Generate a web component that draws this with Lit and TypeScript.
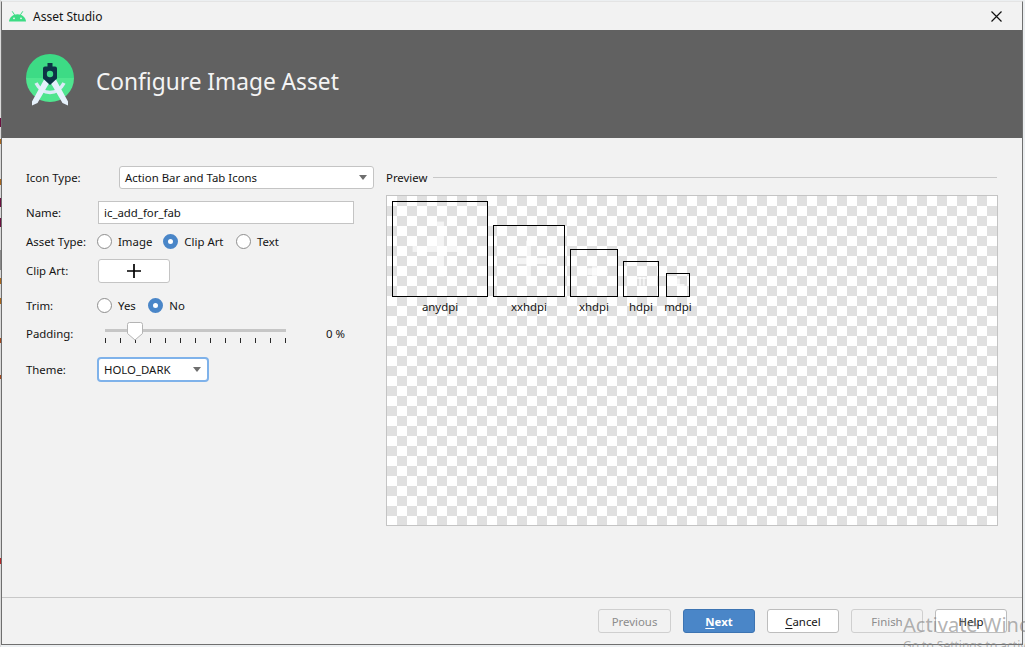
import { LitElement, html, css, svg } from 'lit';
import { customElement } from 'lit/decorators.js';

interface Density { label: string; size: number; cols: number; bars: number[][]; }

// the faint plus inside each preview, in px relative to the box
const DENSITIES: Density[] = [
  { label: 'anydpi', size: 96, cols: 96, bars: [[20, 45, 55, 6], [45, 20, 7, 56]] },
  { label: 'xxhdpi', size: 72, cols: 72, bars: [[24, 33, 30, 6], [33, 15, 5, 45]] },
  { label: 'xhdpi', size: 48, cols: 48, bars: [[17, 19, 21, 7], [22, 17, 5, 21]] },
  { label: 'hdpi', size: 36, cols: 36, bars: [[14, 16, 10, 2], [16, 16, 2, 9], [20, 16, 2, 9]] },
  { label: 'mdpi', size: 24, cols: 28, bars: [[11, 5, 3, 8], [11, 11, 8, 2]] },
];

@customElement('app-root')
export class AppRoot extends LitElement {
  static styles = css`
    :host {
      display: block;
      position: relative;
      width: 1025px;
      height: 647px;
      overflow: hidden;
      background: #eceff1;
      font-family: 'Noto Sans', 'Open Sans', sans-serif;
      font-size: 11.4px;
      color: #141414;
    }
    /* bits of the desktop showing behind the dialog's left edge */
    .behind {
      position: absolute;
      left: 0;
      top: 0;
      width: 1px;
      height: 647px;
      background:
        linear-gradient(#6b1040, #6b1040) 0 118px / 1px 9px no-repeat,
        linear-gradient(#a8661c, #a8661c) 0 139px / 1px 5px no-repeat,
        linear-gradient(#a8661c, #a8661c) 0 179px / 1px 6px no-repeat,
        linear-gradient(#6b1040, #6b1040) 0 198px / 1px 9px no-repeat,
        linear-gradient(#6b1040, #6b1040) 0 218px / 1px 9px no-repeat,
        linear-gradient(#8a8a8a, #8a8a8a) 0 250px / 1px 20px no-repeat,
        linear-gradient(#a8661c, #a8661c) 0 278px / 1px 6px no-repeat,
        linear-gradient(#a8661c, #a8661c) 0 298px / 1px 6px no-repeat,
        linear-gradient(#a04a20, #a04a20) 0 338px / 1px 5px no-repeat,
        linear-gradient(#a04a20, #a04a20) 0 375px / 1px 4px no-repeat,
        linear-gradient(#b52a2a, #b52a2a) 0 558px / 1px 6px no-repeat,
        #d9d9d9;
    }
    .window {
      position: relative;
      box-sizing: border-box;
      margin: 1px 0 0 1px;
      width: 1022px;
      height: 644px;
      border: 1px solid #6f6f6f;
      border-top: 1px solid #e4e4e4;
      background: #f2f2f2;
      display: flex;
      flex-direction: column;
    }
    .titlebar {
      height: 28px;
      font-size: 12px;
      display: flex;
      align-items: center;
      padding: 0 20px 0 7px;
      gap: 7px;
      flex: none;
    }
    .titlebar .name { flex: 1; }
    .banner {
      height: 108px;
      flex: none;
      background: #616161;
      display: flex;
      align-items: center;
      padding-left: 24px;
      gap: 22px;
    }
    .banner svg { margin-bottom: 6px; }
    .banner h1 {
      margin: 0 0 6px;
      font-size: 22.7px;
      font-weight: 400;
      color: #f4f4f4;
    }
    .body {
      flex: 1;
      display: flex;
      padding-top: 22px;
      min-height: 0;
    }
    .form {
      width: 384px;
      flex: none;
      box-sizing: border-box;
      padding-left: 24px;
      display: grid;
      grid-template-columns: 72px 1fr;
      grid-template-rows: 34px 36px 23px 35px 35px 21px 50px;
      align-items: center;
      align-content: start;
    }
    .field { display: flex; align-items: center; }
    .select, .input, .clip {
      box-sizing: border-box;
      background: #fff;
      border: 1px solid #c4c4c4;
      display: flex;
      align-items: center;
    }
    .select {
      height: 23px;
      width: 255px;
      margin-left: 21px;
      margin-right: 10px;
      border-radius: 3px;
      padding: 0 6px 0 5px;
      justify-content: space-between;
    }
    .select.focus {
      width: 112px;
      height: 25px;
      margin: 0 0 0 -1px;
      border: 2px solid #7fb2ea;
      border-radius: 4px;
      padding: 0 6px 0 5px;
    }
    .arrow {
      width: 0;
      height: 0;
      border-left: 4.5px solid transparent;
      border-right: 4.5px solid transparent;
      border-top: 5px solid #6e6e6e;
    }
    .input {
      height: 23px;
      width: 256px;
      padding-left: 5px;
    }
    .clip {
      width: 72px;
      height: 24px;
      border-radius: 3px;
      justify-content: center;
    }
    .radio {
      box-sizing: border-box;
      width: 15px;
      height: 15px;
      border-radius: 50%;
      background: #fff;
      border: 1px solid #8e8e8e;
      margin-right: 6px;
      margin-left: -1px;
      flex: none;
    }
    .radio.on {
      border: 5px solid #4a86c8;
    }
    .field .opt { margin-right: 12px; }
    .field .opt.more { margin-right: 13.5px; }
    .slider { display: flex; align-items: center; margin-left: 7px; height: 20px; }
    .slider svg { margin-top: 1px; }
    .slider .pct { margin-left: 39px; }
    .preview {
      flex: 1;
      box-sizing: border-box;
      padding-right: 24px;
      padding-top: 6px;
      min-width: 0;
    }
    .legend {
      display: flex;
      align-items: center;
      gap: 6px;
      height: 22px;
      margin-bottom: 7px;
    }
    .legend::after {
      content: '';
      flex: 1;
      height: 1px;
      background: #c8c8c8;
      margin-right: 1px;
    }
    .canvas {
      box-sizing: border-box;
      width: 612px;
      height: 331px;
      border: 1px solid #c4c4c4;
      padding: 5px;
      background-color: #fff;
      background-image: conic-gradient(#fff 25%, #e0e0e0 0 50%, #fff 0 75%, #e0e0e0 0);
      background-size: 20px 20px;
      background-position: 10px 0;
    }
    .tiles {
      display: flex;
      gap: 5px;
      align-items: flex-end;
    }
    .tile {
      display: flex;
      flex-direction: column;
      align-items: center;
    }
    .tile .box {
      box-sizing: border-box;
      border: 1px solid #000;
      display: block;
    }
    .tile .cap {
      height: 18px;
      line-height: 19px;
      white-space: nowrap;
    }
    .footer {
      height: 47px;
      flex: none;
      box-sizing: border-box;
      border-top: 1px solid #c8c8c8;
      display: flex;
      justify-content: flex-end;
      align-items: flex-start;
      padding: 11px 15px 0 0;
      gap: 12px;
    }
    .btn {
      box-sizing: border-box;
      width: 72px;
      height: 24px;
      border-radius: 3px;
      border: 1px solid #bdbdbd;
      background: #fff;
      display: flex;
      align-items: center;
      justify-content: center;
    }
    .btn.wide { width: 73px; }
    .btn.off {
      background: transparent;
      border-color: #cfcfcf;
      color: #8c8c8c;
    }
    .btn.primary {
      background: #4a86c8;
      border-color: #3d74b2;
      color: #fff;
      font-weight: 700;
    }
    .watermark {
      position: absolute;
      left: 903px;
      top: 611px;
      font-size: 20px;
      line-height: 27px;
      color: rgba(130, 130, 130, 0.62);
      white-space: nowrap;
      pointer-events: none;
    }
    .watermark small {
      display: block;
      font-size: 12px;
      line-height: 16px;
    }
    u { text-underline-offset: 2px; }
  `;

  private renderTile(d: Density) {
    return html`
      <div class="tile" style="width:${d.cols}px">
        <svg class="box" width=${d.size} height=${d.size} viewBox="0 0 ${d.size} ${d.size}">
          ${d.bars.map(b => svg`<rect x=${b[0]} y=${b[1]} width=${b[2]} height=${b[3]} fill="#fff" fill-opacity="0.65"/>`)}
        </svg>
        <div class="cap">${d.label}</div>
      </div>
    `;
  }

  private renderSlider() {
    const ticks = Array.from({ length: 13 }, (_, i) => i * 15);
    return svg`
      <svg width="182" height="24" viewBox="0 0 182 24">
        <rect x="0" y="7" width="181" height="3" fill="#c6c6c6"/>
        ${ticks.map(x => svg`<rect x=${x} y="16" width="1" height="5" fill="#2a2a2a"/>`)}
        <path d="M22.5 2.5a2 2 0 0 1 2-2h11a2 2 0 0 1 2 2v9l-7.5 6.5-7.5-6.5z" fill="#fff" stroke="#b4b4b4"/>
      </svg>
    `;
  }

  render() {
    return html`
      <div class="behind"></div>
      <div class="window">
        <div class="titlebar">
          <svg width="17" height="11" viewBox="0 0 17 11">
            <path d="M0 10.5C.3 6.6 3.6 3.2 8.5 3.2s8.2 3.4 8.500 7.3z" fill="#3ddc84"/>
            <path d="M3.2 .3l2.4 3.6M13.800 .3l-2.400 3.6" stroke="#3ddc84" stroke-width="1"/>
            <circle cx="5" cy="7.3" r=".9" fill="#f2f2f2"/>
            <circle cx="12" cy="7.3" r=".9" fill="#f2f2f2"/>
          </svg>
          <span class="name">Asset Studio</span>
          <svg width="11" height="11" viewBox="0 0 11 11">
            <path d="M.5 .5l10 10M10.5 .5l-10 10" stroke="#111" stroke-width="1.2"/>
          </svg>
        </div>
        <div class="banner">
          <svg width="48" height="54" viewBox="0 0 48 54">
            <path d="M0 24a24 24 0 0 1 48 0z" fill="#3ddb85"/>
            <path d="M0 24a24 24 0 0 0 48 0z" fill="#4fe58f"/>
            <path d="M10 29c4 7.500 9 9.500 14 9.500s10-2 14-9.500" fill="none" stroke="#dbeaf7" stroke-width="3.500"/>
            <path d="M20 22L6 47.500l0 4 5.500-2.500L25 26zM28 22L42 47.500l0 4-5.500-2.500L23 26z" fill="#e6f1fb"/>
            <path d="M21.500 9h5v3.500H29a2 2 0 0 1 2 2V24.500L24 31l-7-6.500V14.500a2 2 0 0 1 2-2h2.500z" fill="#0d3446"/>
            <circle cx="24" cy="20" r="3.200" fill="#3ddb85"/>
          </svg>
          <h1>Configure Image Asset</h1>
        </div>
        <div class="body">
          <div class="form">
            <span>Icon Type:</span>
            <div class="select"><span>Action Bar and Tab Icons</span><i class="arrow"></i></div>
            <span>Name:</span>
            <div class="input">ic_add_for_fab</div>
            <span>Asset Type:</span>
            <div class="field">
              <i class="radio"></i><span class="opt">Image</span>
              <i class="radio on"></i><span class="opt more">Clip Art</span>
              <i class="radio"></i><span>Text</span>
            </div>
            <span>Clip Art:</span>
            <div class="clip">
              <svg width="14" height="14" viewBox="0 0 14 14"><path d="M7 0v14M0 7h14" stroke="#000" stroke-width="1.700"/></svg>
            </div>
            <span>Trim:</span>
            <div class="field">
              <i class="radio"></i><span class="opt more">Yes</span>
              <i class="radio on"></i><span>No</span>
            </div>
            <span>Padding:</span>
            <div class="slider">${this.renderSlider()}<span class="pct">0 %</span></div>
            <span>Theme:</span>
            <div class="field">
              <div class="select focus"><span>HOLO_DARK</span><i class="arrow"></i></div>
            </div>
          </div>
          <div class="preview">
            <div class="legend">Preview</div>
            <div class="canvas">
              <div class="tiles">${DENSITIES.map(d => this.renderTile(d))}</div>
            </div>
          </div>
        </div>
        <div class="footer">
          <div class="btn off wide">Previous</div>
          <div class="btn primary"><span><u>N</u>ext</span></div>
          <div class="btn"><span><u>C</u>ancel</span></div>
          <div class="btn off">Finish</div>
          <div class="btn">Help</div>
        </div>
      </div>
      <div class="watermark">Activate Windows<small>Go to Settings to activate Windows.</small></div>
    `;
  }
}

declare global {
  interface HTMLElementTagNameMap { 'app-root': AppRoot; }
}
